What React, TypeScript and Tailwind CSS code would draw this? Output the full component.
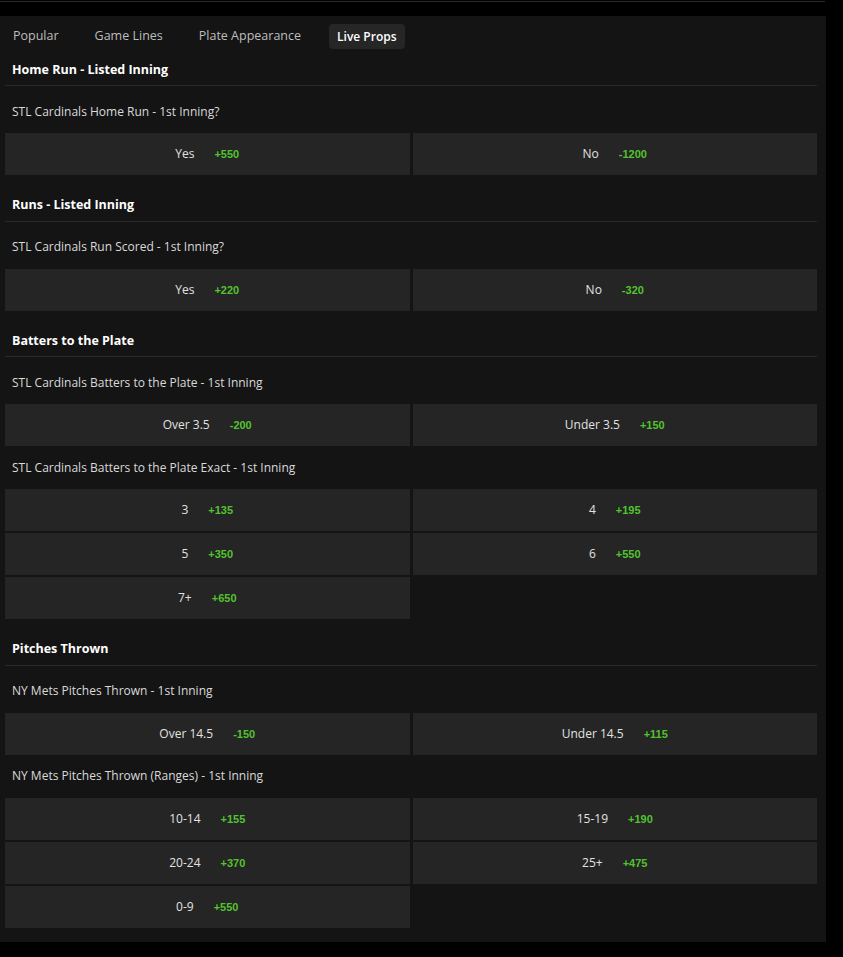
const tabs = ['Popular', 'Game Lines', 'Plate Appearance', 'Live Props']

type Outcome = { label: string; odds: string }
type Market = { question: string; outcomes: Outcome[] }
type Section = { title: string; markets: Market[] }

const sections: Section[] = [
  {
    title: 'Home Run - Listed Inning',
    markets: [
      {
        question: 'STL Cardinals Home Run - 1st Inning?',
        outcomes: [
          { label: 'Yes', odds: '+550' },
          { label: 'No', odds: '-1200' },
        ],
      },
    ],
  },
  {
    title: 'Runs - Listed Inning',
    markets: [
      {
        question: 'STL Cardinals Run Scored - 1st Inning?',
        outcomes: [
          { label: 'Yes', odds: '+220' },
          { label: 'No', odds: '-320' },
        ],
      },
    ],
  },
  {
    title: 'Batters to the Plate',
    markets: [
      {
        question: 'STL Cardinals Batters to the Plate - 1st Inning',
        outcomes: [
          { label: 'Over 3.5', odds: '-200' },
          { label: 'Under 3.5', odds: '+150' },
        ],
      },
      {
        question: 'STL Cardinals Batters to the Plate Exact - 1st Inning',
        outcomes: [
          { label: '3', odds: '+135' },
          { label: '4', odds: '+195' },
          { label: '5', odds: '+350' },
          { label: '6', odds: '+550' },
          { label: '7+', odds: '+650' },
        ],
      },
    ],
  },
  {
    title: 'Pitches Thrown',
    markets: [
      {
        question: 'NY Mets Pitches Thrown - 1st Inning',
        outcomes: [
          { label: 'Over 14.5', odds: '-150' },
          { label: 'Under 14.5', odds: '+115' },
        ],
      },
      {
        question: 'NY Mets Pitches Thrown (Ranges) - 1st Inning',
        outcomes: [
          { label: '10-14', odds: '+155' },
          { label: '15-19', odds: '+190' },
          { label: '20-24', odds: '+370' },
          { label: '25+', odds: '+475' },
          { label: '0-9', odds: '+550' },
        ],
      },
    ],
  },
]

function OddsButton({ outcome }: { outcome: Outcome }) {
  return (
    <button
      type="button"
      className="flex h-[42px] items-center justify-center gap-5 bg-[#252525] transition hover:bg-[#2e2e2e]"
    >
      <span className="text-[12px] text-[#e2e2e2]">{outcome.label}</span>
      <span className="mt-px font-['Liberation_Sans',Arial,sans-serif] text-[11px] font-bold text-[#52c32f]">
        {outcome.odds}
      </span>
    </button>
  )
}

export default function App() {
  return (
    <div className="min-h-screen bg-black pt-px font-['Open_Sans',sans-serif]">
      <div className="h-px w-[825px] bg-[#2a2a2a]" />
      <main className="mt-[14px] w-[826px] bg-[#141414] pb-[14px] pl-[5px] pr-[9px] pt-2">
        <nav className="flex items-center gap-5">
          {tabs.map((tab) => (
            <button
              key={tab}
              type="button"
              className={
                tab === 'Live Props'
                  ? 'h-[25px] rounded-sm bg-[#262626] px-2 text-[12px] font-semibold text-white'
                  : 'h-[25px] rounded-sm px-2 text-[12.5px] text-[#bdbdbd] transition hover:text-white'
              }
            >
              {tab}
            </button>
          ))}
        </nav>

        {sections.map((section, i) => (
          <section key={section.title} className={i === 0 ? 'mt-1' : 'mt-[13.5px]'}>
            <h2 className="flex h-[33px] items-center border-b border-[#292929] pl-[7px] pt-[2px] text-[12.5px] font-bold text-white">
              {section.title}
            </h2>
            <div className="mt-1">
              {section.markets.map((market) => (
                <div key={market.question}>
                  <p className="flex h-[43px] items-center pl-[7px] text-[12px] text-[#dadada]">
                    {market.question}
                  </p>
                  <div className="grid grid-cols-2 gap-x-[3px] gap-y-[2px]">
                    {market.outcomes.map((outcome) => (
                      <OddsButton key={outcome.label} outcome={outcome} />
                    ))}
                  </div>
                </div>
              ))}
            </div>
          </section>
        ))}
      </main>
    </div>
  )
}
